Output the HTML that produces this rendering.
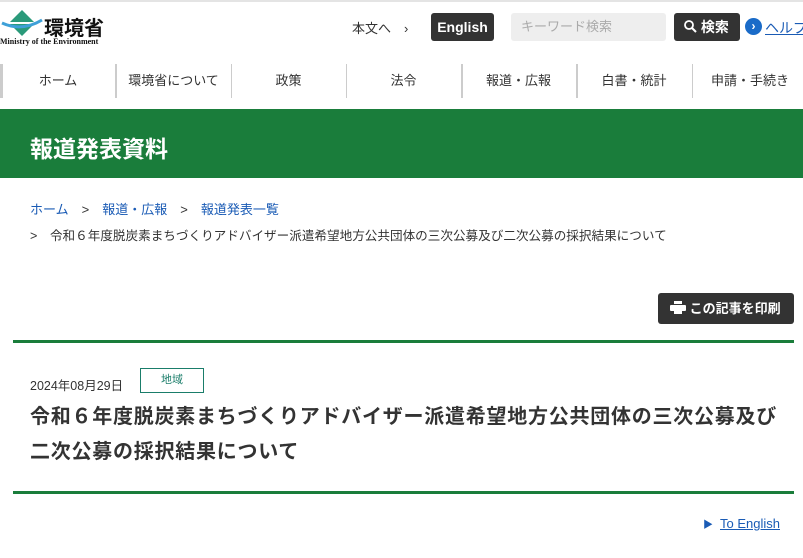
<!DOCTYPE html>
<html><head><meta charset="utf-8"><style>
*{margin:0;padding:0;box-sizing:border-box}
body{width:803px;height:558px;overflow:hidden;background:#fff;font-family:"Liberation Sans","Noto Sans CJK JP",sans-serif;color:#333;position:relative}
.a{position:absolute;white-space:nowrap}
a{color:#1a5bb5}
</style></head><body>
<div class="a" style="left:0;top:0;width:803px;height:2px;background:#e4e4e4"></div>
<svg class="a" style="left:0;top:8px" width="44" height="30" viewBox="0 0 44 30">
<polygon points="22,2 34,14 22,14 10,14" fill="#2a9a7a"/>
<polygon points="10,16 34,16 22,28" fill="#2a9a7a"/>
<path d="M2,15 Q22,24 42,12" stroke="#3ea0d8" stroke-width="3" fill="none"/>
</svg>
<div class="a" style="left:44px;top:12px;font-size:20px;font-weight:bold;color:#111">環境省</div>
<div class="a" style="left:0;top:37px;font-size:8px;font-family:'Liberation Serif',serif;font-weight:bold;color:#111">Ministry of the Environment</div>
<div class="a" style="left:352px;top:18px;font-size:13px">本文へ　›</div>
<div class="a" style="left:431px;top:13px;width:63px;height:28px;background:#333;border-radius:3px;color:#fff;font-size:14px;font-weight:bold;text-align:center;line-height:28px">English</div>
<div class="a" style="left:511px;top:13px;width:155px;height:28px;background:#eee;border-radius:3px;color:#aaa;font-size:13px;line-height:28px;padding-left:10px">キーワード検索</div>
<div class="a" style="left:674px;top:13px;width:66px;height:28px;background:#333;border-radius:3px;color:#fff;font-size:14px;font-weight:bold;line-height:28px;padding-left:10px">
<svg width="13" height="13" viewBox="0 0 13 13" style="vertical-align:-1px"><circle cx="5" cy="5" r="4" stroke="#fff" stroke-width="1.8" fill="none"/><line x1="8" y1="8" x2="12" y2="12" stroke="#fff" stroke-width="2"/></svg> 検索</div>
<div class="a" style="left:745px;top:18px;width:17px;height:17px;border-radius:50%;background:#1a6bc8;color:#fff;font-size:12px;line-height:16px;text-align:center;font-weight:bold">›</div>
<div class="a" style="left:765px;top:18px;font-size:14px;color:#1a5bb5;text-decoration:underline">ヘルプ</div>
<div class="a" style="left:0;top:64px;width:803px;height:34px;font-size:13px">
<div class="a" style="left:0;top:0;width:3px;height:34px;background:#ccc"></div>
<div class="a" style="left:0;width:116px;line-height:34px;text-align:center">ホーム</div>
<div class="a" style="left:115px;top:0;width:2px;height:34px;background:#ccc"></div>
<div class="a" style="left:116px;width:115px;line-height:34px;text-align:center">環境省について</div>
<div class="a" style="left:231px;top:0;width:1px;height:34px;background:#ccc"></div>
<div class="a" style="left:231px;width:115px;line-height:34px;text-align:center">政策</div>
<div class="a" style="left:346px;top:0;width:1px;height:34px;background:#ccc"></div>
<div class="a" style="left:346px;width:115px;line-height:34px;text-align:center">法令</div>
<div class="a" style="left:461px;top:0;width:2px;height:34px;background:#ccc"></div>
<div class="a" style="left:461px;width:115px;line-height:34px;text-align:center">報道・広報</div>
<div class="a" style="left:576px;top:0;width:2px;height:34px;background:#ccc"></div>
<div class="a" style="left:576px;width:116px;line-height:34px;text-align:center">白書・統計</div>
<div class="a" style="left:692px;top:0;width:1px;height:34px;background:#ccc"></div>
<div class="a" style="left:692px;width:116px;line-height:34px;text-align:center">申請・手続き</div>
</div>
<div class="a" style="left:0;top:109px;width:803px;height:69px;background:#1a7d3b"></div>
<div class="a" style="left:30px;top:130px;font-size:23px;font-weight:bold;color:#fff">報道発表資料</div>
<div class="a" style="left:30px;top:199px;font-size:13px"><a>ホーム</a>　&gt;　<a>報道・広報</a>　&gt;　<a>報道発表一覧</a></div>
<div class="a" style="left:30px;top:225px;font-size:12.6px">&gt;　令和６年度脱炭素まちづくりアドバイザー派遣希望地方公共団体の三次公募及び二次公募の採択結果について</div>
<div class="a" style="left:658px;top:293px;width:136px;height:31px;background:#333;border-radius:3px;color:#fff;font-size:13px;font-weight:bold;line-height:31px;padding-left:12px">
<svg width="16" height="13" viewBox="0 0 16 13" style="vertical-align:-1px"><rect x="4" y="0" width="8" height="3" fill="#fff"/><rect x="0" y="4" width="16" height="6" rx="1" fill="#fff"/><rect x="4" y="9" width="8" height="4" fill="#fff"/></svg> この記事を印刷</div>
<div class="a" style="left:13px;top:340px;width:781px;height:3px;background:#1a7d3b"></div>
<div class="a" style="left:30px;top:375px;font-size:12.5px">2024年08月29日</div>
<div class="a" style="left:140px;top:368px;width:64px;height:25px;border:1px solid #1a7d6a;color:#1a7d6a;font-size:11px;text-align:center;line-height:23px">地域</div>
<div class="a" style="left:30px;top:400px;font-size:20px;font-weight:bold;line-height:35px;letter-spacing:0.75px">令和６年度脱炭素まちづくりアドバイザー派遣希望地方公共団体の三次公募及び<br>二次公募の採択結果について</div>
<div class="a" style="left:13px;top:491px;width:781px;height:3px;background:#1a7d3b"></div>
<div class="a" style="left:703px;top:516px;font-size:13px;color:#1a5bb5"><span style="font-size:10px">▶</span>&nbsp; <a style="text-decoration:underline">To English</a></div>
</body></html>
